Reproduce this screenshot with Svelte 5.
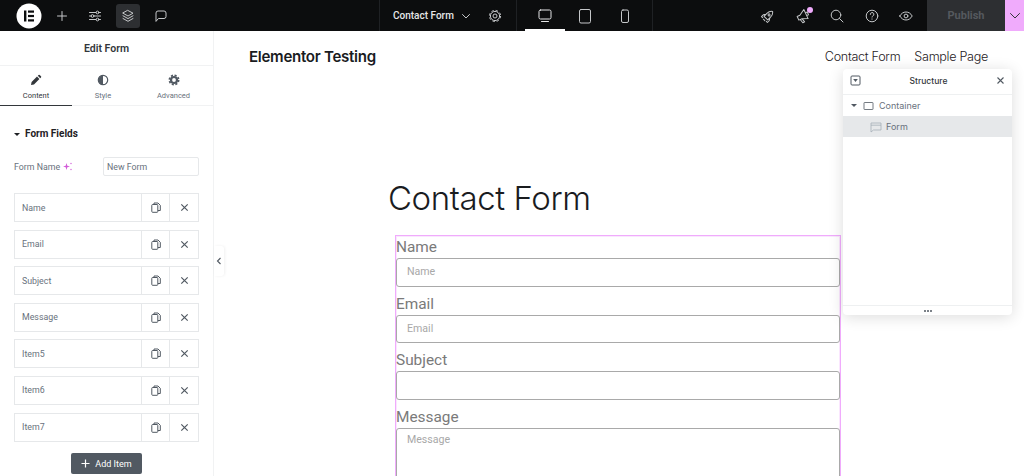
<script>
  const fields = ['Name', 'Email', 'Subject', 'Message', 'Item5', 'Item6', 'Item7'];
  const formFields = [
    { label: 'Name', placeholder: 'Name' },
    { label: 'Email', placeholder: 'Email' },
    { label: 'Subject', placeholder: '' }
  ];
</script>

<div class="page">
  <header class="topbar">
    <div class="left">
      <div class="logo">
        <svg width="26" height="26" viewBox="0 0 26 26"><circle cx="13" cy="13" r="12.500" fill="#fff" /><rect x="8" y="7.500" width="2.400" height="11" fill="#0c0d0e" /><rect x="12" y="7.500" width="6" height="2.200" fill="#0c0d0e" /><rect x="12" y="11.900" width="6" height="2.200" fill="#0c0d0e" /><rect x="12" y="16.300" width="6" height="2.200" fill="#0c0d0e" /></svg>
      </div>
      <button class="tool plus" aria-label="Add">
        <svg width="16" height="16" viewBox="0 0 16 16" class="ico"><path d="M8 3.500v9M3.500 8h9" /></svg>
      </button>
      <button class="tool" aria-label="Settings">
        <svg width="16" height="16" viewBox="0 0 16 16" class="ico"><path d="M2.500 4.500h6.500M12 4.500h1.500M2.500 8h2M7 8h6.500M2.500 11.500h6.500M12 11.500h1.500" /><circle cx="10.500" cy="4.500" r="1.400" /><circle cx="5.500" cy="8" r="1.400" /><circle cx="10.500" cy="11.500" r="1.400" /></svg>
      </button>
      <button class="tool active" aria-label="Structure">
        <svg width="16" height="16" viewBox="0 0 16 16" class="ico"><path d="M8 2.500l5 2.700L8 8 3 5.200zM3 7.800L8 10.600l5-2.800M3 10.500L8 13.300l5-2.800" /></svg>
      </button>
      <button class="tool" aria-label="Comments">
        <svg width="16" height="16" viewBox="0 0 16 16" class="ico"><path d="M3 13V5a2 2 0 0 1 2-2h6a2 2 0 0 1 2 2v3.500a2 2 0 0 1-2 2H5.800z" /></svg>
      </button>
    </div>
    <div class="doc">
      <span class="doc-title">Contact Form</span>
      <svg width="12" height="12" viewBox="0 0 12 12" class="ico"><path d="M2.500 4.500L6 8l3.500-3.500" /></svg>
      <svg class="gear" width="14" height="14" viewBox="0 0 14 14"><circle cx="7" cy="7" r="2" fill="none" stroke="#c5c7c9" /><circle cx="7" cy="7" r="4.600" fill="none" stroke="#c5c7c9" /><circle cx="7" cy="7" r="5.600" fill="none" stroke="#c5c7c9" stroke-dasharray="2.400 2" /></svg>
    </div>
    <div class="devices">
      <div class="device current">
        <svg width="16" height="16" viewBox="0 0 16 16" class="ico light"><rect x="2" y="2" width="12" height="9" rx="1.500" /><path d="M4.500 13.500h7" /></svg>
      </div>
      <div class="device">
        <svg width="16" height="16" viewBox="0 0 16 16" class="ico"><rect x="2.500" y="1.500" width="11" height="13.500" rx="1.500" /></svg>
      </div>
      <div class="device">
        <svg width="16" height="16" viewBox="0 0 16 16" class="ico"><rect x="4.500" y="2" width="7" height="12.500" rx="1.500" /></svg>
      </div>
    </div>
    <div class="actions">
      <svg width="16" height="16" viewBox="0 0 16 16" class="ico"><g transform="rotate(45 8 8)"><path d="M8 1.500c1.800 1.300 2.600 3.200 2.600 5.500v4H5.400V7c0-2.300.8-4.200 2.600-5.500zM5.400 8L3.800 10.500v2.500h1.600M10.600 8l1.600 2.500v2.500h-1.600M7 13.500h2" /><circle cx="8" cy="6.500" r="1" /></g></svg>
      <span class="notify">
        <svg width="16" height="16" viewBox="0 0 16 16" class="ico"><g transform="rotate(-25 8 8)"><path d="M2.500 6h3l6-3.500v10L5.500 10h-3zM4 10l1 4h2l-1-3.700M11.500 6.200h2v3h-2" /></g></svg>
        <i class="dot"></i>
      </span>
      <svg width="16" height="16" viewBox="0 0 16 16" class="ico"><circle cx="7" cy="7" r="4.800" /><path d="M10.500 10.500L14 14" /></svg>
      <svg width="16" height="16" viewBox="0 0 16 16" class="ico"><circle cx="8" cy="8" r="5.800" /><path d="M6.300 6.400a1.800 1.800 0 1 1 2.500 1.600c-.6.300-.8.600-.8 1.100M8 10.900v.3" /></svg>
      <svg width="16" height="16" viewBox="0 0 16 16" class="ico"><path d="M1.800 8C3.300 5.400 5.400 4 8 4s4.700 1.400 6.200 4c-1.500 2.600-3.600 4-6.200 4S3.300 10.600 1.800 8z" /><circle cx="8" cy="8" r="1.900" /></svg>
    </div>
    <div class="publish">Publish</div>
    <div class="publish-more">
      <svg width="12" height="12" viewBox="0 0 12 12" class="ico dark"><path d="M1.500 3.500L6 8l4.500-4.500" /></svg>
    </div>
  </header>

  <div class="main">
    <aside class="panel">
      <div class="panel-title">Edit Form</div>
      <div class="tabs">
        <div class="tab on">
          <svg width="12" height="12" viewBox="0 0 12 12"><path d="M1 11l.6-3L7 2.600 9.400 5 4 10.400zM7.800 1.800l.8-.8a.8.8 0 0 1 1.100 0l1.300 1.300a.8.8 0 0 1 0 1.100l-.8.800z" fill="#33373b" /></svg>
          <span>Content</span>
        </div>
        <div class="tab style">
          <svg width="12" height="12" viewBox="0 0 12 12"><circle cx="6" cy="6" r="4.700" fill="none" stroke="#515962" stroke-width="1.200" /><path d="M6 1.300a4.700 4.700 0 0 0 0 9.400z" fill="#515962" /></svg>
          <span>Style</span>
        </div>
        <div class="tab adv">
          <svg width="12" height="12" viewBox="0 0 12 12"><circle cx="6" cy="6" r="3" fill="none" stroke="#515962" stroke-width="2.200" /><circle cx="6" cy="6" r="4.700" fill="none" stroke="#515962" stroke-width="1.600" stroke-dasharray="2.100 1.590" /></svg>
          <span>Advanced</span>
        </div>
      </div>
      <div class="section">
        <span class="caret"></span>
        <b>Form Fields</b>
      </div>
      <div class="name-row">
        <span class="name-label">Form Name</span>
        <svg width="9" height="9" viewBox="0 0 9 9"><path d="M3.500 1l.8 2.700L7 4.500l-2.700.8-.8 2.700-.8-2.700L0 4.500l2.700-.8z" fill="#d25cd8" /><circle cx="8" cy="1.500" r=".7" fill="#d25cd8" /><circle cx="8" cy="7.500" r=".7" fill="#d25cd8" /></svg>
        <div class="name-input">New Form</div>
      </div>
      <div class="repeater">
        {#each fields as field}
          <div class="item">
            <span class="item-name">{field}</span>
            <span class="item-btn">
              <svg width="10" height="11" viewBox="0 0 10 11" class="copy"><path d="M3 2.500V1h4l2.300 2.300V8.500H7" /><rect x=".8" y="2.500" width="6" height="7.800" rx=".8" /></svg>
            </span>
            <span class="item-btn">
              <svg width="9" height="9" viewBox="0 0 9 9" class="cross"><path d="M1.300 1.300l6.400 6.400M7.700 1.300L1.300 7.700" /></svg>
            </span>
          </div>
        {/each}
      </div>
      <button class="add">
        <svg width="9" height="9" viewBox="0 0 9 9"><path d="M4.500 .5v8M.5 4.500h8" stroke="#fff" stroke-width="1.200" /></svg>
        Add Item
      </button>
    </aside>

    <main class="canvas">
      <span class="collapse">
        <svg width="6" height="8" viewBox="0 0 6 8"><path d="M4.500 1L1.500 4l3 3" fill="none" stroke="#515962" stroke-width="1.100" /></svg>
      </span>
      <div class="site-head">
        <div class="site-name">Elementor Testing</div>
        <nav class="site-nav">
          <span>Contact Form</span>
          <span>Sample Page</span>
        </nav>
      </div>
      <h1>Contact Form</h1>
      <form class="form">
        {#each formFields as f}
          <div class="label">{f.label}</div>
          <div class="input">{f.placeholder}</div>
        {/each}
        <div class="label">Message</div>
        <div class="input area">Message</div>
      </form>

      <section class="structure">
        <div class="st-head">
          <svg width="11" height="11" viewBox="0 0 11 11"><rect x="1" y="1" width="9" height="9" rx="1" fill="none" stroke="#515962" /><path d="M3.200 4h4.600L5.500 7z" fill="#515962" /></svg>
          <span class="st-title">Structure</span>
          <svg width="9" height="9" viewBox="0 0 9 9"><path d="M1.500 1.500l6 6M7.500 1.500l-6 6" stroke="#515962" stroke-width="1.100" /></svg>
        </div>
        <div class="st-row">
          <span class="st-caret"></span>
          <svg width="11" height="10" viewBox="0 0 11 10"><rect x="1" y="1.500" width="9" height="7" rx=".5" fill="none" stroke="#515962" stroke-width=".8" /></svg>
          <span>Container</span>
        </div>
        <div class="st-row sel">
          <svg width="12" height="12" viewBox="0 0 12 12"><path d="M1 2h10v7H3.500L1 11zM1 4.200h10" fill="none" stroke="#a4afb7" stroke-width=".8" /></svg>
          <span>Form</span>
        </div>
        <div class="st-space"></div>
        <div class="st-foot">
          <i></i><i></i><i></i>
        </div>
      </section>
    </main>
  </div>
</div>

<style>
  :global(body) {
    margin: 0;
    background: #fff;
  }

  .page {
    width: 1024px;
    height: 476px;
    overflow: hidden;
    display: flex;
    flex-direction: column;
    font-family: Roboto, "Liberation Sans", sans-serif;
    color: #515962;
  }

  .topbar {
    height: 31px;
    flex: none;
    display: flex;
    align-items: stretch;
    background: #0c0d0e;
  }

  .ico {
    fill: none;
    stroke: #c5c7c9;
    stroke-width: 1;
    stroke-linecap: round;
    stroke-linejoin: round;
  }

  .ico.light {
    stroke: #e6e7e8;
  }

  .ico.dark {
    stroke: #33373b;
  }

  .left {
    width: 380px;
    flex: none;
    display: flex;
    align-items: center;
    border-right: 1px solid #1f2124;
    box-sizing: border-box;
    padding-left: 16px;
  }

  .logo {
    display: flex;
    margin-right: 4px;
  }

  .tool {
    width: 24px;
    height: 24px;
    margin-right: 9px;
    padding: 0;
    border: 0;
    border-radius: 3px;
    background: none;
    display: flex;
    align-items: center;
    justify-content: center;
  }

  .tool.plus {
    margin-left: 4px;
  }

  .tool.active {
    background: #2d2f32;
  }

  .doc {
    width: 137px;
    flex: none;
    box-sizing: border-box;
    border-right: 1px solid #1f2124;
    display: flex;
    align-items: center;
    padding-left: 13px;
    color: #e6e7e8;
    font-size: 10px;
    font-weight: 500;
  }

  .doc-title {
    margin-right: 6px;
    white-space: nowrap;
  }

  .gear {
    margin-left: 16px;
  }

  .devices {
    width: 136px;
    flex: none;
    box-sizing: border-box;
    border-right: 1px solid #1f2124;
    display: flex;
    padding-left: 8px;
  }

  .device {
    width: 40px;
    display: flex;
    align-items: center;
    justify-content: center;
    box-sizing: border-box;
  }

  .device.current {
    border-bottom: 2px solid #fff;
    padding-top: 2px;
  }

  .actions {
    flex: 1;
    box-sizing: border-box;
    display: flex;
    align-items: center;
    justify-content: flex-end;
    gap: 18.500px;
    padding-right: 13px;
  }

  .notify {
    position: relative;
    display: flex;
  }

  .dot {
    position: absolute;
    top: -1px;
    right: -2px;
    width: 6px;
    height: 6px;
    border-radius: 50%;
    background: #f0abfc;
  }

  .publish {
    width: 78px;
    flex: none;
    background: #2d2f32;
    color: #55595e;
    font-size: 11px;
    font-weight: 700;
    display: flex;
    align-items: center;
    justify-content: center;
  }

  .publish-more {
    flex: none;
    width: 19px;
    background: #f0abfc;
    display: flex;
    align-items: center;
    justify-content: center;
  }

  .main {
    flex: 1;
    display: flex;
    min-height: 0;
  }

  .panel {
    width: 214px;
    flex: none;
    box-sizing: border-box;
    border-right: 1px solid #f1f2f3;
    display: flex;
    flex-direction: column;
  }

  .panel-title {
    height: 35px;
    flex: none;
    display: flex;
    align-items: center;
    justify-content: center;
    font-size: 10.500px;
    font-weight: 600;
    color: #33373b;
    border-bottom: 1px solid #f1f2f3;
    box-sizing: border-box;
  }

  .tabs {
    display: flex;
    height: 40px;
    flex: none;
    border-bottom: 1px solid #f1f2f3;
    box-sizing: border-box;
  }

  .tab {
    width: 72px;
    display: flex;
    flex-direction: column;
    align-items: center;
    gap: 5px;
    padding-top: 8px;
    box-sizing: border-box;
    font-size: 7.500px;
    color: #69727d;
  }

  .tab.style {
    width: 62px;
  }

  .tab.adv {
    width: 79px;
  }

  .tab.on {
    color: #33373b;
    border-bottom: 1.500px solid #33373b;
    height: 40px;
  }

  .section {
    display: flex;
    align-items: center;
    gap: 5px;
    margin: 22px 0 0 14px;
    font-family: Roboto, sans-serif;
    font-size: 10px;
    color: #1f2124;
    line-height: 12px;
  }

  .section b {
    font-weight: 700;
  }

  .caret {
    width: 0;
    height: 0;
    border: 3px solid transparent;
    border-top: 3.500px solid #1f2124;
    border-bottom: 0;
  }

  .name-row {
    display: flex;
    align-items: center;
    margin: 17px 14px 0 14px;
    font-size: 8.800px;
    color: #69727d;
  }

  .name-label {
    margin-right: 3px;
  }

  .name-input {
    margin-left: auto;
    width: 96px;
    height: 19px;
    box-sizing: border-box;
    border: 1px solid #e6e8ea;
    border-radius: 2px;
    padding-left: 3px;
    line-height: 18px;
  }

  .repeater {
    margin: 17px 14px 0 14px;
    display: flex;
    flex-direction: column;
    gap: 7.600px;
  }

  .item {
    height: 29px;
    box-sizing: border-box;
    border: 1px solid #e6e8ea;
    display: flex;
    align-items: center;
    font-size: 8.800px;
    color: #69727d;
  }

  .item-name {
    flex: 1;
    padding-left: 7px;
  }

  .item-btn {
    width: 28.600px;
    height: 100%;
    border-left: 1px solid #e6e8ea;
    display: flex;
    align-items: center;
    justify-content: center;
    box-sizing: border-box;
  }

  .copy {
    fill: #fff;
    stroke: #515962;
    stroke-width: 1;
  }

  .cross {
    stroke: #515962;
    stroke-width: 1.200;
  }

  .add {
    align-self: center;
    margin-top: 11.500px;
    width: 71px;
    height: 21px;
    flex: none;
    display: flex;
    align-items: center;
    justify-content: center;
    gap: 5px;
    border: 0;
    border-radius: 2px;
    background: #515962;
    color: #fff;
    font-family: Roboto, sans-serif;
    font-size: 9px;
    padding: 0;
  }

  .canvas {
    flex: 1;
    position: relative;
    display: flex;
    flex-direction: column;
    min-width: 0;
  }

  .collapse {
    position: absolute;
    left: 0;
    top: 215px;
    width: 10px;
    height: 30px;
    background: #fff;
    border-radius: 0 3px 3px 0;
    box-shadow: 1px 0 3px rgba(0, 0, 0, .06);
    display: flex;
    align-items: center;
    justify-content: center;
  }

  .site-head {
    display: flex;
    justify-content: space-between;
    align-items: center;
    margin: 16px 36px 0 35px;
    height: 20px;
  }

  .site-name {
    font-family: Inter, sans-serif;
    font-size: 15.100px;
    font-weight: 600;
    letter-spacing: -.3px;
    color: #1a1c1f;
  }

  .site-nav {
    display: flex;
    gap: 14px;
    font-family: Inter, sans-serif;
    font-size: 12.600px;
    font-weight: 300;
    letter-spacing: -.3px;
    color: #1f2124;
  }

  h1 {
    margin: 111px 0 0 174px;
    font-family: Inter, sans-serif;
    font-size: 33px;
    font-weight: 300;
    letter-spacing: -.4px;
    line-height: 42px;
    color: #1a1c1f;
  }

  .form {
    margin: 16px 0 0 181px;
    padding-top: 1px;
    width: 446px;
    box-sizing: border-box;
    border: 1px solid #f0abfc;
    border-bottom: 0;
    box-shadow: inset 0 0 0 1px rgba(240, 171, 252, .3);
    flex: 1;
  }

  .label {
    font-size: 15.400px;
    line-height: 21px;
    color: #7a7a7a;
  }

  .input {
    height: 28.500px;
    box-sizing: border-box;
    border: 1px solid #a9a9a9;
    border-radius: 3px;
    padding-left: 10px;
    margin-bottom: 7px;
    line-height: 26px;
    font-size: 10.600px;
    color: #a8a8a8;
  }

  .input.area {
    height: 90px;
    margin-bottom: 0;
    padding-top: 1px;
    line-height: 20px;
  }

  .structure {
    position: absolute;
    left: 629px;
    top: 38px;
    width: 169px;
    height: 246px;
    background: #fff;
    border-radius: 4px;
    box-shadow: 0 2px 15px rgba(0, 0, 0, .14);
    display: flex;
    flex-direction: column;
    color: #69727d;
    font-size: 9px;
  }

  .st-head {
    height: 26px;
    flex: none;
    box-sizing: border-box;
    border-bottom: 1px solid #eef0f1;
    display: flex;
    align-items: center;
    padding: 0 7px 2px;
  }

  .st-title {
    flex: 1;
    text-align: center;
    font-family: Inter, sans-serif;
    font-weight: 500;
    font-size: 8.500px;
    color: #33373b;
  }

  .st-row {
    height: 21px;
    flex: none;
    display: flex;
    align-items: center;
    gap: 5px;
    padding-left: 8px;
    font-family: Inter, sans-serif;
  }

  .st-caret {
    width: 0;
    height: 0;
    border: 3.500px solid transparent;
    border-top: 3.500px solid #515962;
    border-bottom: 0;
    margin-right: 1px;
  }

  .st-row.sel {
    background: #e6e8ea;
    padding-left: 27px;
    gap: 4px;
  }

  .st-space {
    flex: 1;
  }

  .st-foot {
    height: 9px;
    flex: none;
    border-top: 1px solid #eef0f1;
    display: flex;
    align-items: center;
    justify-content: center;
    gap: 1px;
  }

  .st-foot i {
    width: 2px;
    height: 2px;
    border-radius: 50%;
    background: #515962;
  }
</style>
